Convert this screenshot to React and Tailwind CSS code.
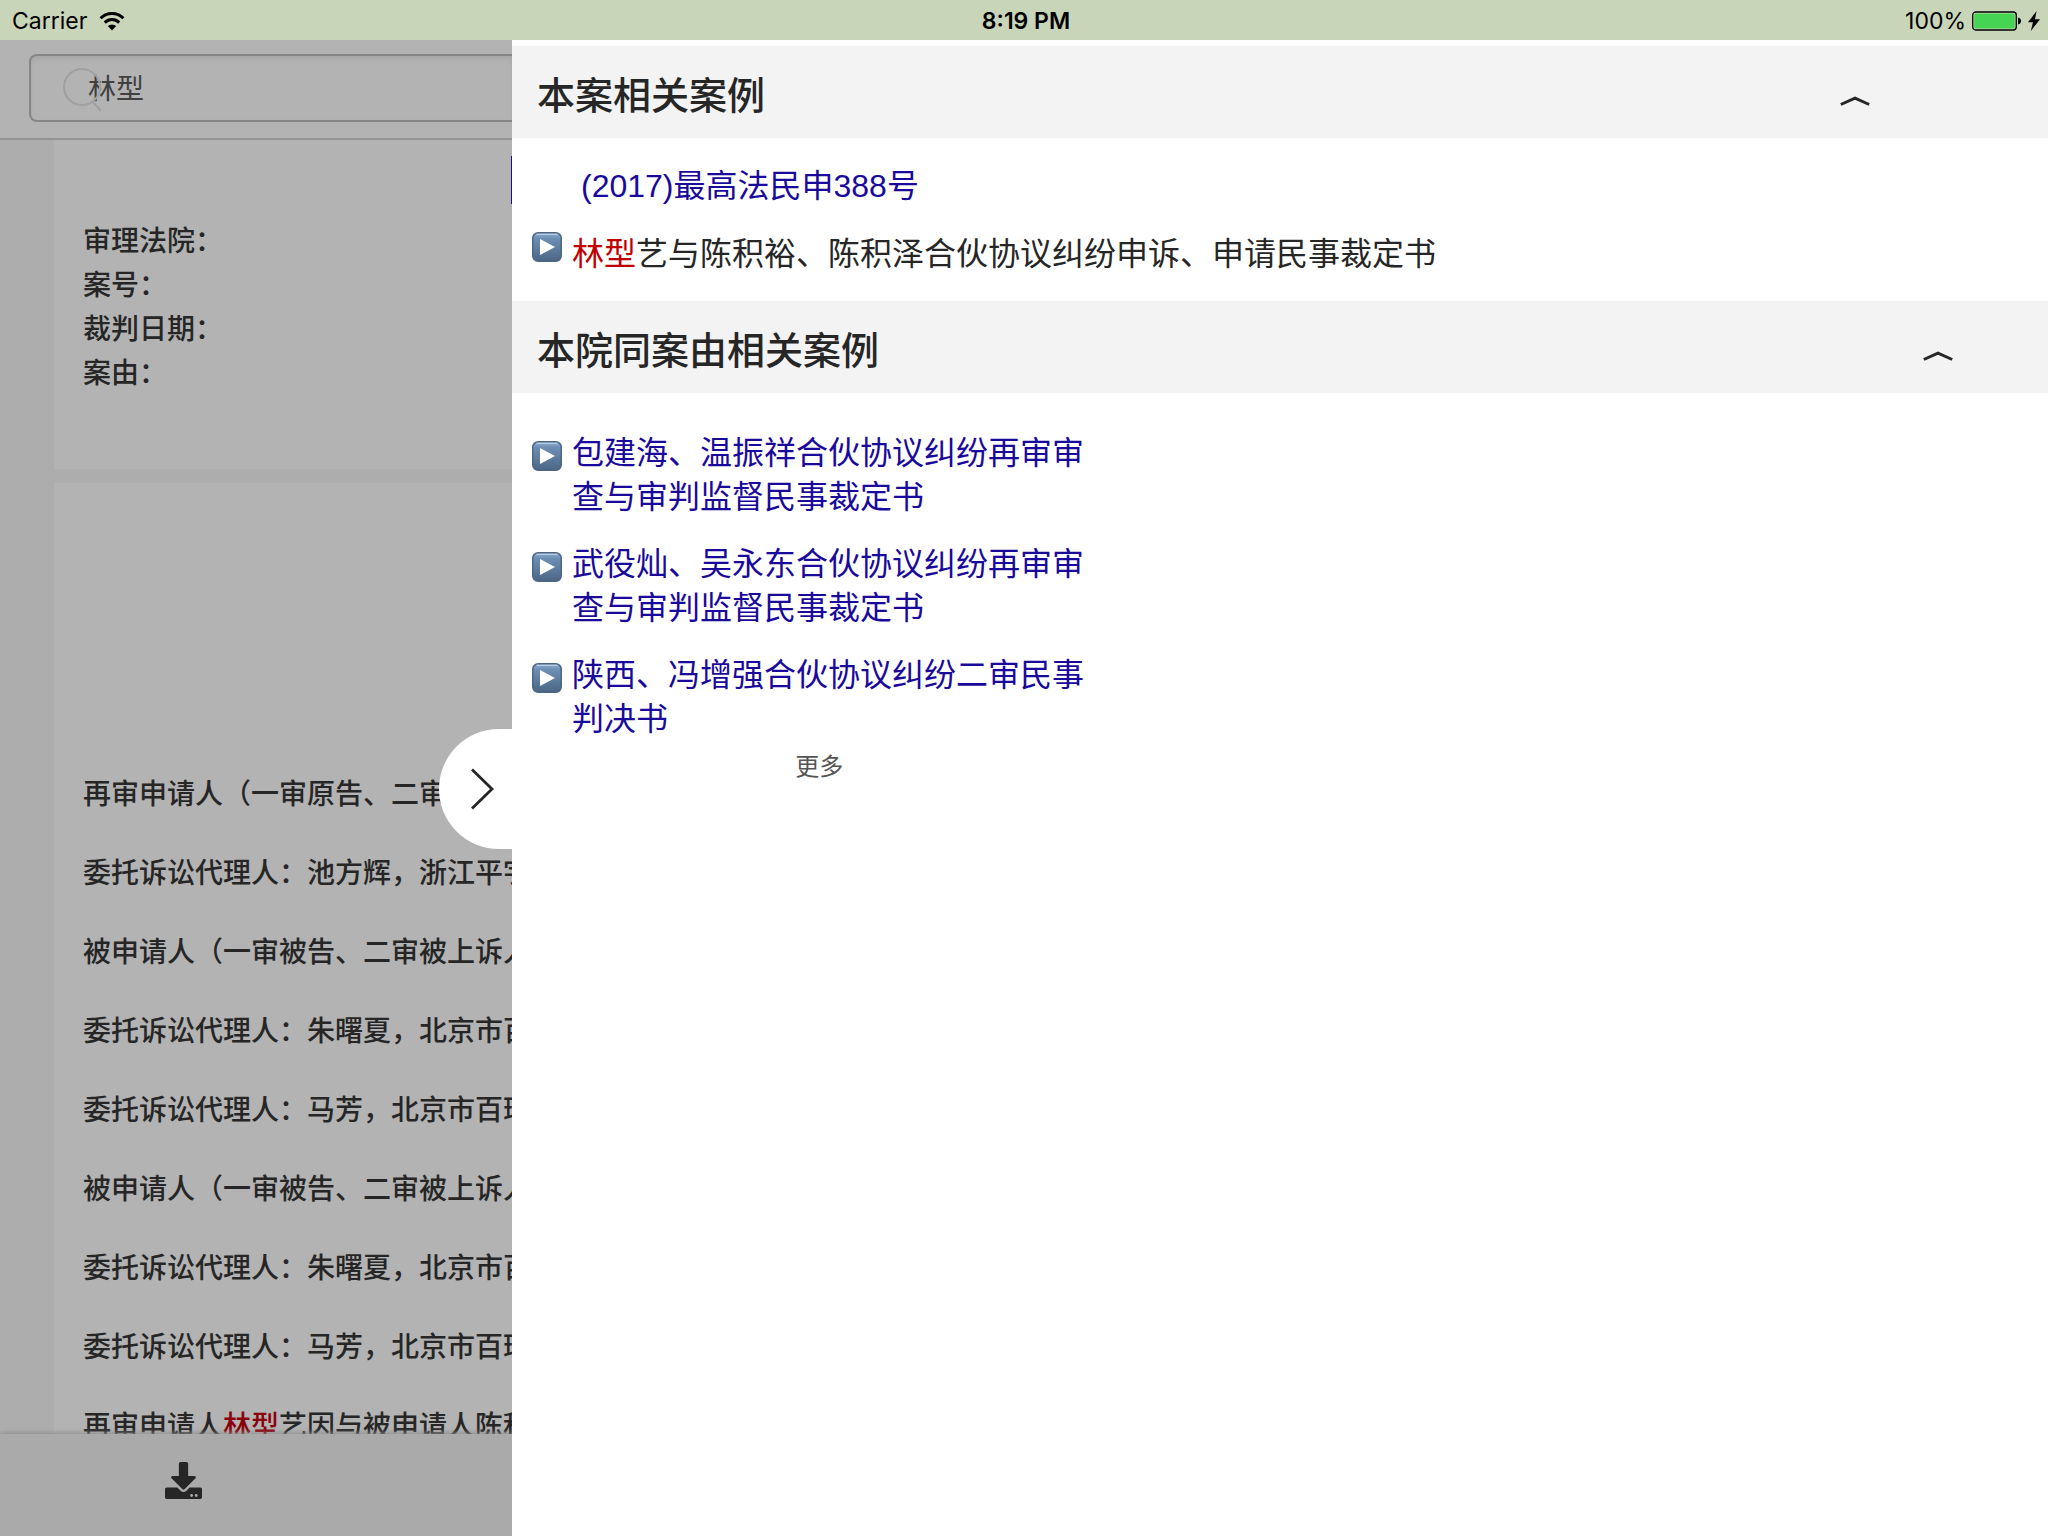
import React from "react";
import { FaDownload } from "react-icons/fa";

const caseFields = ["审理法院：", "案号：", "裁判日期：", "案由："];

const parties = [
  "再审申请人（一审原告、二审",
  "委托诉讼代理人：池方辉，浙江平宇",
  "被申请人（一审被告、二审被上诉人",
  "委托诉讼代理人：朱曙夏，北京市百",
  "委托诉讼代理人：马芳，北京市百瑞",
  "被申请人（一审被告、二审被上诉人",
  "委托诉讼代理人：朱曙夏，北京市百",
  "委托诉讼代理人：马芳，北京市百瑞",
];

const relatedCases = [
  "包建海、温振祥合伙协议纠纷再审审查与审判监督民事裁定书",
  "武役灿、吴永东合伙协议纠纷再审审查与审判监督民事裁定书",
  "陕西、冯增强合伙协议纠纷二审民事判决书",
];

const WifiIcon = () => (
  <svg width="26" height="20" viewBox="0 0 26 20" fill="none" stroke="#000" strokeWidth="3">
    <path d="M1.6 7.2a16 16 0 0 1 22.8 0" />
    <path d="M5.8 11.6a10.2 10.2 0 0 1 14.4 0" />
    <path d="M13 19.4l-4.2-4.3a6 6 0 0 1 8.4 0z" fill="#000" stroke="none" />
  </svg>
);

const BatteryIcon = () => (
  <svg width="50" height="20" viewBox="0 0 50 20">
    <rect x="0.75" y="1" width="43.5" height="18" rx="3" fill="none" stroke="#000" strokeWidth="1.3" />
    <rect x="2.2" y="2.4" width="40.6" height="15.2" rx="1.6" fill="#45d552" />
    <path d="M46 6.5c2 .6 3 1.8 3 3.5s-1 2.9-3 3.5z" fill="#000" />
  </svg>
);

const BoltIcon = () => (
  <svg width="12" height="20" viewBox="0 0 12 20">
    <path d="M8.6 0L0 11.2h5L2.8 20 12 8.2H7z" fill="#000" />
  </svg>
);

const SearchIcon = () => (
  <svg width="42" height="46" viewBox="0 0 42 46" fill="none" stroke="#a0a0a0" strokeWidth="2">
    <circle cx="20" cy="20" r="18" />
    <path d="M31 35l8 9" />
  </svg>
);

const PlayIcon = ({ className }) => (
  <svg className={className} width="30" height="30" viewBox="0 0 30 30">
    <defs>
      <linearGradient id="play-fill" x1="0" y1="0" x2="0" y2="1">
        <stop offset="0" stopColor="#8fb0d0" />
        <stop offset="0.2" stopColor="#6d8fb4" />
        <stop offset="1" stopColor="#4b6585" />
      </linearGradient>
    </defs>
    <rect x="0.75" y="0.75" width="28.5" height="28.5" rx="5.5" fill="url(#play-fill)" stroke="#4d6684" strokeWidth="1.5" />
    <path d="M5 2.3h20" stroke="#b4cde4" strokeWidth="1.2" strokeLinecap="round" />
    <path d="M8 7v16l15-8z" fill="#fff" />
  </svg>
);

const ChevronUp = () => (
  <svg width="30" height="10" viewBox="0 0 30 10" fill="none" stroke="#262626" strokeWidth="3">
    <path d="M0.8 8.5L15 2.2l14.2 6.3" />
  </svg>
);

const StatusBar = () => (
  <header className="grid grid-cols-3 items-center h-10 shrink-0 pl-3 pr-2 pt-0.5 bg-[#c9d5b9] text-black font-[Inter,sans-serif] text-[23px]">
    <div className="flex items-center gap-3">
      <span>Carrier</span>
      <WifiIcon />
    </div>
    <div className="text-center font-semibold">8:19 PM</div>
    <div className="flex items-center justify-end gap-1.5">
      <span>100%</span>
      <BatteryIcon />
      <BoltIcon />
    </div>
  </header>
);

const DocumentPane = () => (
  <div className="flex flex-col w-1/4 min-h-0 overflow-hidden bg-[#adadad] text-[28px] leading-[44px] text-[#262626] whitespace-nowrap">
    {/* Search */}
    <div className="h-[100px] shrink-0 pl-[29px] pt-3.5 bg-[#b3b3b3] border-b-2 border-[#949494]">
      <div className="relative">
        <input
          type="text"
          aria-label="搜索"
          defaultValue="林型"
          className="block w-full h-[68px] pl-[57px] pb-0.5 bg-[#b3b3b3] border-2 border-r-0 border-[#868686] rounded-l-lg text-[#404040] shadow-[inset_0_3px_4px_#a6a6a6] outline-none"
        />
        <span className="absolute left-[33px] top-[13px] pointer-events-none">
          <SearchIcon />
        </span>
      </div>
    </div>

    {/* Judgment */}
    <main className="flex-1 min-h-0 overflow-hidden pl-[54px] font-medium">
      <section className="pt-4 pb-[73px] pl-[29px] bg-[#b3b3b3]">
        <div className="h-12 mb-4 border-r border-[#1c0f80]" />
        {caseFields.map((label) => (
          <p key={label}>{label}</p>
        ))}
      </section>

      <section className="mt-3.5 pt-[290px] pl-[29px] space-y-[35px] bg-[#b3b3b3]">
        {parties.map((line, i) => (
          <p key={i}>{line}</p>
        ))}
        <p>
          再审申请人<em className="not-italic text-[#8b000c]">林型</em>艺因与被申请人陈积
        </p>
      </section>
    </main>

    {/* Toolbar */}
    <footer className="relative h-[102px] shrink-0 pt-7 pl-[165px] bg-[#aaa] shadow-[0_-1px_5px_#8a8a8a]">
      <button type="button" aria-label="下载" className="block">
        <FaDownload size={37} />
      </button>
    </footer>
  </div>
);

const SectionHeading = ({ title, className }) => (
  <div className={`flex items-center justify-between h-[92px] pl-[25px] bg-[#f3f3f3] ${className}`}>
    <h2 className="pt-2 text-[38px] leading-[56px] font-medium">{title}</h2>
    <button type="button" aria-label={title} className="pt-[18px]">
      <ChevronUp />
    </button>
  </div>
);

const RelatedPanel = () => (
  <aside className="relative w-3/4 pt-1.5 bg-white text-[32px] leading-[44px] text-[#262626]">
    <button
      type="button"
      aria-label="收起"
      className="absolute right-full top-[689px] flex items-center w-[73px] h-[120px] pl-[31px] bg-white rounded-l-[60px]"
    >
      <svg width="25" height="42" viewBox="0 0 25 42" fill="none" stroke="#262626" strokeWidth="2.8">
        <path d="M2 1.5L22 21 2 40.5" />
      </svg>
    </button>

    <SectionHeading title="本案相关案例" className="pr-[178px]" />
    <div className="pt-[26px] pb-[25px] pl-5">
      <a href="#case" className="block ml-[49px] text-[#1a0a9c]">(2017)最高法民申388号</a>
      <div className="flex gap-2.5 mt-6">
        <PlayIcon className="shrink-0" />
        <p>
          <em className="not-italic text-[#c00000]">林型</em>艺与陈积裕、陈积泽合伙协议纠纷申诉、申请民事裁定书
        </p>
      </div>
    </div>

    <SectionHeading title="本院同案由相关案例" className="pr-[95px]" />
    <div className="w-2/5 px-5 pt-[38px]">
      <ul className="space-y-[23px]">
        {relatedCases.map((title) => (
          <li key={title} className="flex gap-2.5">
            <PlayIcon className="shrink-0 mt-2.5" />
            <a href="#related" className="text-[#1a0a9c]">{title}</a>
          </li>
        ))}
      </ul>
      <button type="button" className="block mx-auto mt-1 text-2xl leading-[44px] text-[#555]">更多</button>
    </div>
  </aside>
);

const App = () => (
  <div className="flex flex-col h-screen overflow-hidden font-['Liberation_Sans','Noto_Sans_CJK_SC',sans-serif]">
    <StatusBar />
    <div className="flex flex-1 min-h-0">
      <DocumentPane />
      <RelatedPanel />
    </div>
  </div>
);

export default App;
